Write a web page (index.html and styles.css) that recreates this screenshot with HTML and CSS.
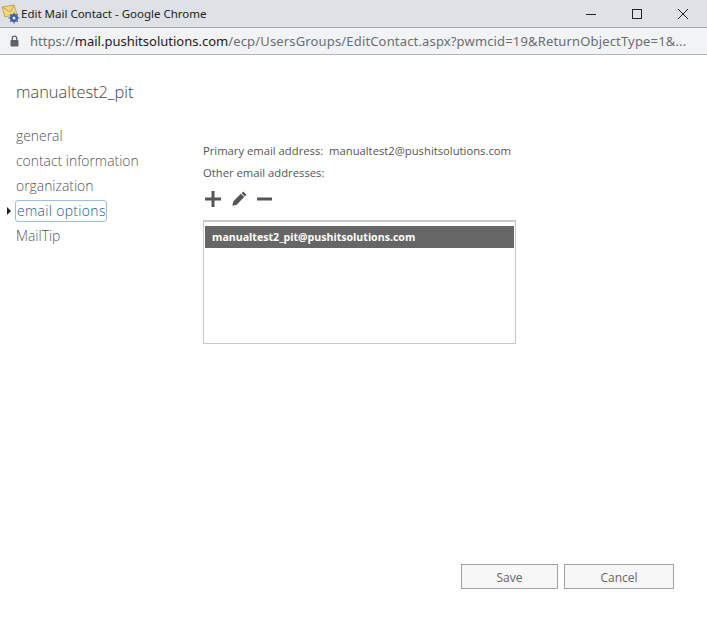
FILE: index.html
```html
<!DOCTYPE html>
<html lang="en">
<head>
<meta charset="utf-8">
<title>Edit Mail Contact</title>
<link rel="stylesheet" href="styles.css">
</head>
<body>
<div class="window">
  <header class="titlebar">
    <div class="title-left">
      <svg class="app-icon" width="20" height="20" viewBox="0 0 20 20">
        <path d="M1 3 L13 1 L16 10 L4 13 Z" fill="#f2d77e" stroke="#b89a45" stroke-width="0.8"/>
        <path d="M1 3 L9.500 8 L13 1" fill="none" stroke="#b89a45" stroke-width="0.8"/>
        <circle cx="13" cy="14" r="4" fill="#3f5fa8"/>
        <circle cx="13" cy="14" r="1.500" fill="#dfe6f5"/>
        <path d="M13 8.500v2M13 17.500v2M7.500 14h2M16.500 14h2M9.200 10.200l1.400 1.400M15.400 16.400l1.400 1.400M9.200 17.800l1.400-1.400M15.400 11.600l1.400-1.400" stroke="#3f5fa8" stroke-width="1.200"/>
      </svg>
      <span class="title-text">Edit Mail Contact - Google Chrome</span>
    </div>
    <div class="controls">
      <svg width="12" height="12" viewBox="0 0 12 12"><path d="M1 6.500h10" stroke="#222" stroke-width="1"/></svg>
      <svg width="12" height="12" viewBox="0 0 12 12"><rect x="1.500" y="1.500" width="9" height="9" fill="none" stroke="#222" stroke-width="1"/></svg>
      <svg width="12" height="12" viewBox="0 0 12 12"><path d="M1 1l10 10M11 1L1 11" stroke="#222" stroke-width="1"/></svg>
    </div>
  </header>
  <div class="urlbar">
    <svg class="lock" width="9" height="12" viewBox="0 0 9 12">
      <path d="M2.300 5.500V3.300a2.200 2.200 0 0 1 4.400 0v2.200" fill="none" stroke="#5f6368" stroke-width="1.300"/>
      <rect x="0.500" y="5" width="8" height="6.500" rx="0.800" fill="#5f6368"/>
    </svg>
    <span class="url"><span class="url-muted">https://</span><span class="url-host">mail.pushitsolutions.com</span><span class="url-muted url-path">/ecp/UsersGroups/EditContact.aspx?pwmcid=19&amp;ReturnObjectType=1&amp;...</span></span>
  </div>
  <main class="dialog">
    <h1 class="heading">manualtest2_pit</h1>
    <div class="columns">
      <nav class="nav">
        <a class="nav-item">general</a>
        <a class="nav-item">contact information</a>
        <a class="nav-item">organization</a>
        <a class="nav-item active">email options</a>
        <a class="nav-item">MailTip</a>
      </nav>
      <section class="content">
        <p class="line primary">Primary email address:&nbsp; manualtest2@pushitsolutions.com</p>
        <p class="line other">Other email addresses:</p>
        <div class="toolbar">
          <svg width="16" height="16" viewBox="0 0 16 16"><path d="M6.500 0h3v6.500H16v3H9.500V16h-3V9.500H0v-3h6.500z" fill="#555"/></svg>
          <svg width="16" height="16" viewBox="0 0 17 17"><path d="M13 0.500l3.500 3.500-1.800 1.800-3.500-3.500zM10.500 3l3.500 3.500-8 8-4.500 1.200 1-4.700z" fill="#555"/></svg>
          <svg width="15" height="16" viewBox="0 0 15 16"><path d="M0 6.500h15v3H0z" fill="#555"/></svg>
        </div>
        <div class="listbox">
          <div class="list-row">manualtest2_pit@pushitsolutions.com</div>
        </div>
      </section>
    </div>
    <footer class="actions">
      <button class="btn btn-save">Save</button>
      <button class="btn btn-cancel">Cancel</button>
    </footer>
  </main>
</div>
</body>
</html>
```

FILE: styles.css
```css
* { box-sizing: border-box; }
html, body { margin: 0; padding: 0; background: #fff; }
.window { width: 707px; height: 622px; display: flex; flex-direction: column; overflow: hidden; font-family: "Open Sans", "Liberation Sans", sans-serif; }
.titlebar { height: 28px; background: #dee1e6; border-bottom: 1px solid #a6a6a6; display: flex; align-items: center; justify-content: space-between; padding: 0 18px 0 1px; }
.title-left { display: flex; align-items: center; gap: 0; }
.title-text { font-size: 11.500px; color: #222; font-family: "Noto Sans", "Open Sans", sans-serif; }
.controls { display: flex; gap: 34px; align-items: center; }
.urlbar { height: 27px; background: #f1f3f4; border-bottom: 1px solid #b5b5b5; display: flex; align-items: center; padding-left: 10px; gap: 11px; }
.lock { flex-shrink: 0; }
.url { font-size: 13px; white-space: nowrap; font-family: "Noto Sans", "Open Sans", sans-serif; }
.url-muted { color: #6b6e72; }
.url-path { letter-spacing: 0.160px; }
.url-host { color: #222; }
.dialog { flex: 1; display: flex; flex-direction: column; padding: 0 33px 0 16px; background: #fff; }
.heading { margin: 26px 0 0; font-size: 16.400px; font-weight: 300; line-height: 22px; color: #444; }
.columns { display: flex; flex: 1; margin-top: 21px; }
.nav { width: 187px; display: flex; flex-direction: column; align-items: flex-start; }
.nav-item { height: 25px; line-height: 23px; font-size: 13.900px; font-weight: 300; color: #555; white-space: nowrap; position: relative; }
.nav-item.active { color: #1a5a96; height: 20px; line-height: 20px; margin: 2px 0 3px; padding: 0 0 0 1px; letter-spacing: 0.350px; outline: 1px solid #9dbde3; border-radius: 2px; }
.nav-item.active::before { content: ""; position: absolute; left: -9px; top: 6px; border-left: 4px solid #222; border-top: 4px solid transparent; border-bottom: 4px solid transparent; }
.content { flex: 1; display: flex; flex-direction: column; padding-top: 19px; }
.line { margin: 0; font-size: 11.250px; line-height: 15px; color: #555; white-space: nowrap; }
.other { margin-top: 7px; }
.toolbar { display: flex; align-items: center; gap: 10px; margin-top: 9px; height: 20px; padding-left: 2px; }
.listbox { margin-top: 11px; width: 313px; height: 124px; border: 1px solid #c8c8c8; border-top-width: 2px; padding: 4px 1px 0 1px; }
.list-row { height: 22px; line-height: 23px; background: #666; color: #fff; font-size: 10.600px; font-weight: 700; padding-left: 7px; white-space: nowrap; }
.actions { display: flex; justify-content: flex-end; gap: 6px; margin-bottom: 33px; }
.btn { height: 25px; background: #f7f7f7; border: 1px solid #a0a0a0; color: #666; font-family: inherit; font-size: 12px; padding: 1px 0 0; }
.btn-save { width: 97px; }
.btn-cancel { width: 110px; }
```
